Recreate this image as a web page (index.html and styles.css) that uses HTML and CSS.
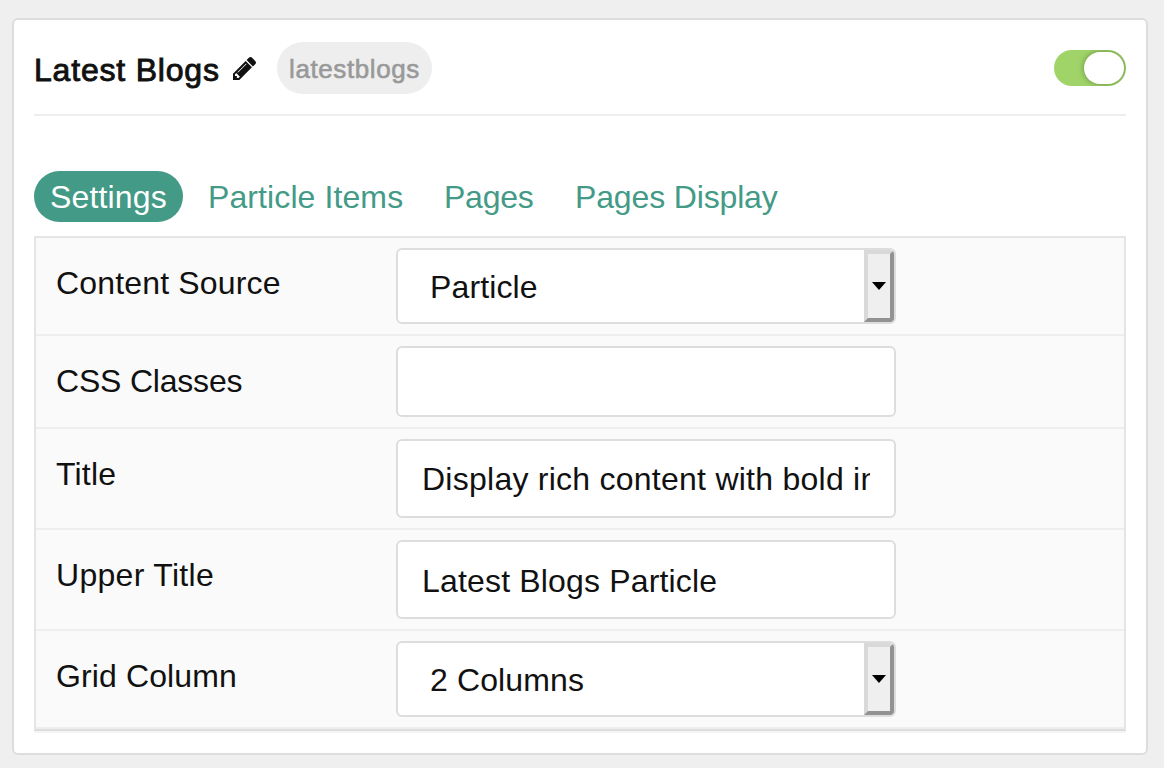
FILE: index.html
```html
<!DOCTYPE html>
<html lang="en">
<head>
<meta charset="utf-8">
<title>Latest Blogs</title>
<link rel="stylesheet" href="styles.css">
</head>
<body>
<main class="card">
  <header class="card-header">
    <h1 class="title">Latest Blogs</h1>
    <svg class="pencil" viewBox="128 149 1515 1515" aria-hidden="true"><path d="M491 1536l91-91-235-235-91 91v107h128v128h107zm523-928q0-22-22-22-10 0-17 7l-542 542q-7 7-7 17 0 22 22 22 10 0 17-7l542-542q7-7 7-17zm-54-192l416 416-832 832h-416v-416zm683 96q0 53-37 90l-166 166-416-416 166-165q36-38 90-38 53 0 91 38l235 234q37 39 37 91z"/></svg>
    <span class="chip">latestblogs</span>
    <span class="toggle"><span class="knob"></span></span>
  </header>
  <nav class="tabs">
    <a class="tab active">Settings</a>
    <a class="tab items">Particle Items</a>
    <a class="tab pages">Pages</a>
    <a class="tab display">Pages Display</a>
  </nav>
  <section class="panel">
    <div class="row">
      <span class="label source">Content Source</span>
      <div class="field select"><span class="value particle">Particle</span><span class="drop"><svg class="arrow" viewBox="0 0 14 8"><path d="M0 0h14L7 8z"/></svg></span></div>
    </div>
    <div class="row">
      <span class="label css">CSS Classes</span>
      <div class="field empty"></div>
    </div>
    <div class="row">
      <span class="label name">Title</span>
      <div class="field input raised"><span class="value rich">Display rich content with bold in</span></div>
    </div>
    <div class="row">
      <span class="label upper">Upper Title</span>
      <div class="field input"><span class="value blogs">Latest Blogs Particle</span></div>
    </div>
    <div class="row">
      <span class="label grid">Grid Column</span>
      <div class="field select"><span class="value columns">2 Columns</span><span class="drop"><svg class="arrow" viewBox="0 0 14 8"><path d="M0 0h14L7 8z"/></svg></span></div>
    </div>
  </section>
</main>
</body>
</html>
```
FILE: styles.css
```css
* { box-sizing: border-box; }
body {
  margin: 0;
  height: 768px;
  padding: 18px 16px 13px 12px;
  background: #efefef;
  color: #111;
  font: 32px/40px "Liberation Sans", Arial, sans-serif;
  overflow: hidden;
}
.card {
  height: 737px;
  padding: 0 20px;
  background: #fff;
  border: 2px solid #ddd;
  border-radius: 6px;
}
.card-header {
  display: flex;
  align-items: center;
  height: 96px;
  padding-top: 2px;
  border-bottom: 2px solid #eee;
}
.title {
  width: 199px;
  margin: 4px 0 0;
  font-size: 32px;
  font-weight: 400;
  letter-spacing: 0.8px;
  white-space: nowrap;
  -webkit-text-stroke: 0.9px #111;
}
.pencil { width: 23px; height: 23px; fill: #111; }
.chip {
  width: 155px;
  height: 52px;
  margin-left: 21px;
  border-radius: 26px;
  background: #eee;
  color: #999;
  font-size: 26px;
  line-height: 54px;
  text-align: center;
  letter-spacing: 0.6px;
  -webkit-text-stroke: 0.6px #999;
}
.toggle {
  display: flex;
  justify-content: flex-end;
  width: 72px;
  height: 36px;
  margin-left: auto;
  padding: 2px;
  border-radius: 18px;
  background: #a0d468;
  overflow: hidden;
}
.knob {
  width: 40px;
  height: 32px;
  border-radius: 16px;
  background: #fff;
  box-shadow: 0 0 6px rgba(0, 0, 0, 0.35);
}
.tabs {
  display: flex;
  margin-top: 55px;
  height: 51px;
  color: #439a86;
  line-height: 52px;
  white-space: nowrap;
}
.active {
  width: 149px;
  padding-left: 16px;
  border-radius: 25.5px;
  background: #439a86;
  color: #fff;
  letter-spacing: 0.15px;
}
.items { margin-left: 25px; width: 236px; letter-spacing: 0.1px; }
.pages { width: 131px; letter-spacing: -0.25px; }
.display { letter-spacing: -0.15px; }
.panel {
  margin-top: 14px;
  border: 2px solid #e5e5e5;
  border-bottom-color: #ddd;
  background: #fafafa;
  box-shadow: 0 2px 0 #f4f4f4;
}
.row {
  display: flex;
  padding: 10px 0 10px 20px;
  border-bottom: 2px solid #eee;
}
.label { width: 340px; padding-top: 15px; white-space: nowrap; }
.source { letter-spacing: 0.17px; }
.css { letter-spacing: -0.2px; }
.name { letter-spacing: 0.2px; }
.upper { letter-spacing: 0.3px; }
.grid { letter-spacing: 0.12px; }
.field {
  display: flex;
  width: 500px;
  background: #fff;
  border: 2px solid #ddd;
  border-radius: 6px;
  overflow: hidden;
}
.value { white-space: nowrap; }
.select { height: 76px; }
.select .value { flex: 1; padding: 17px 0 0 32px; letter-spacing: 0.12px; }
.empty { height: 71px; }
.input { height: 79px; padding: 14px 24px; }
.raised { padding-top: 13px; }
.input .value { width: 448px; height: 50px; line-height: 50px; overflow: hidden; }
.rich { letter-spacing: 0.25px; }
.blogs { letter-spacing: 0.17px; }
.drop {
  display: flex;
  align-items: center;
  justify-content: center;
  width: 30px;
  height: 72px;
  border: 4px solid;
  border-color: #d9d9d9 #929292 #929292 #d9d9d9;
  border-radius: 0 4px 4px 0;
  background: #efefef;
}
.arrow { width: 14px; height: 8px; flex: none; fill: #000; }
```
